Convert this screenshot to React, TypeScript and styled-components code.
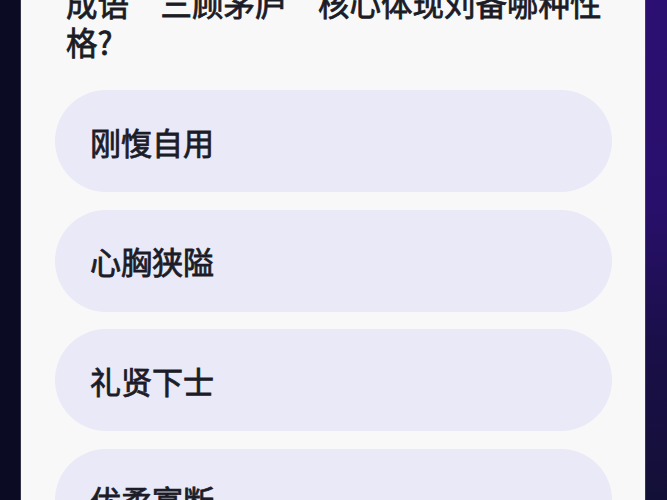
import React from 'react';
import styled, { createGlobalStyle } from 'styled-components';

const GlobalStyle = createGlobalStyle`
	html, body {
		margin: 0;
		height: 100%;
		overflow: hidden;
	}
	body {
		background:
			linear-gradient(to right, #0b0c24 50%, transparent 50%),
			linear-gradient(to bottom, #2c0f72 0%, #290f6c 40%, #1a0f48 70%, #131037 100%);
		font-family: "Noto Sans CJK SC", "Noto Sans", sans-serif;
	}
`;

const question = {
	title: '成语“三顾茅庐”核心体现刘备哪种性格?',
	options: ['刚愎自用', '心胸狭隘', '礼贤下士', '优柔寡断'],
};

const App = () => {
	return (
		<>
			<GlobalStyle />
			<Page>
				<Card>
					<Title>{question.title}</Title>
					{question.options.map((option) => (
						<Option key={option}>{option}</Option>
					))}
				</Card>
			</Page>
		</>
	);
};

export default App;

const Page = styled.div`
	display: flex;
	justify-content: center;
	padding: 0 22px 0 21px;
`;

const Card = styled.div`
	display: flex;
	flex-direction: column;
	gap: 17.5px;
	width: 624px;
	margin-top: -17px;
	padding: 0 33px 40px 34px;
	box-sizing: border-box;
	background-color: #f8f8f8;
	box-shadow: 0 0 0 1px rgba(120, 120, 140, 0.35);
`;

const Title = styled.h2`
	margin: 0 -10px 11.5px 0;
	padding: 0 0 0 11px;
	font-size: 31.5px;
	line-height: 39px;
	font-weight: 400;
	-webkit-text-stroke: 0.8px currentColor;
	color: #1c1c26;
`;

const Option = styled.button`
	display: flex;
	align-items: center;
	height: 102px;
	padding: 0 0 0 35px;
	border: none;
	border-radius: 51px;
	background-color: #e9e9f7;
	font-family: inherit;
	font-size: 31px;
	font-weight: 400;
	-webkit-text-stroke: 0.8px currentColor;
	color: #1c1c28;
	text-align: left;
	cursor: pointer;
`;
